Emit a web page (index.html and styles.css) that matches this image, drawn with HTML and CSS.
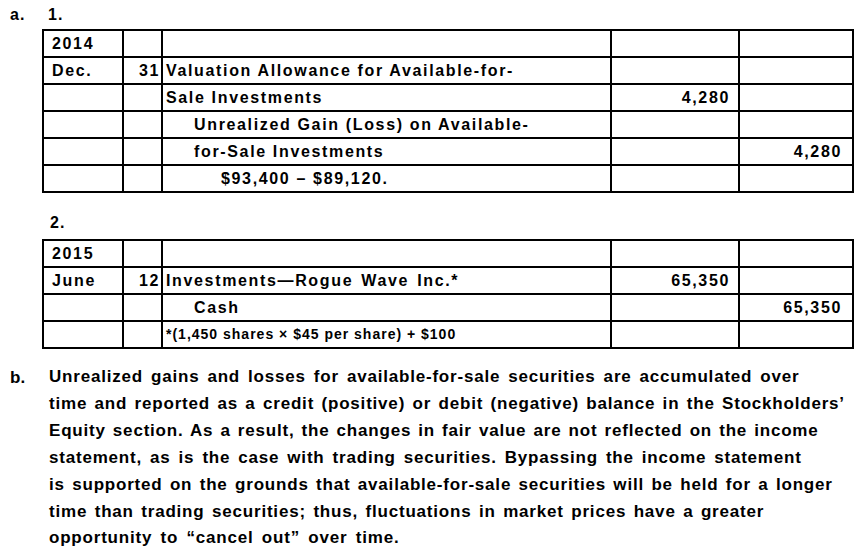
FILE: index.html
```html
<!DOCTYPE html>
<html>
<head>
<meta charset="utf-8">
<link rel="stylesheet" href="styles.css">
</head>
<body>
<div class="page">
  <div class="head"><span class="lbl">a.</span><span class="num">1.</span></div>
  <table class="journal j1">
    <colgroup><col class="c-mo"><col class="c-day"><col class="c-desc"><col class="c-dr"><col class="c-cr"></colgroup>
    <tr><td class="mo">2014</td><td></td><td></td><td></td><td></td></tr>
    <tr><td class="mo">Dec.</td><td class="day">31</td><td class="desc">Valuation Allowance for Available-for-</td><td></td><td></td></tr>
    <tr><td></td><td></td><td class="desc">Sale Investments</td><td class="amt">4,280</td><td></td></tr>
    <tr><td></td><td></td><td class="desc ind1">Unrealized Gain (Loss) on Available-</td><td></td><td></td></tr>
    <tr><td></td><td></td><td class="desc ind1">for-Sale Investments</td><td></td><td class="amt cr">4,280</td></tr>
    <tr><td></td><td></td><td class="desc ind2">$93,400 – $89,120.</td><td></td><td></td></tr>
  </table>
  <div class="head head2"><span class="num">2.</span></div>
  <table class="journal j2">
    <colgroup><col class="c-mo"><col class="c-day"><col class="c-desc"><col class="c-dr"><col class="c-cr"></colgroup>
    <tr><td class="mo">2015</td><td></td><td></td><td></td><td></td></tr>
    <tr><td class="mo">June</td><td class="day">12</td><td class="desc wide">Investments—Rogue Wave Inc.*</td><td class="amt">65,350</td><td></td></tr>
    <tr><td></td><td></td><td class="desc ind1">Cash</td><td></td><td class="amt cr">65,350</td></tr>
    <tr><td></td><td></td><td class="desc note">*(1,450 shares × $45 per share) + $100</td><td></td><td></td></tr>
  </table>
  <div class="partb">
    <span class="lbl">b.</span>
    <p class="text">
      <span class="ln l1">Unrealized gains and losses for available-for-sale securities are accumulated over</span>
      <span class="ln l2">time and reported as a credit (positive) or debit (negative) balance in the Stockholders’</span>
      <span class="ln l3">Equity section. As a result, the changes in fair value are not reflected on the income</span>
      <span class="ln l4">statement, as is the case with trading securities. Bypassing the income statement</span>
      <span class="ln l5">is supported on the grounds that available-for-sale securities will be held for a longer</span>
      <span class="ln l6">time than trading securities; thus, fluctuations in market prices have a greater</span>
      <span class="ln l7">opportunity to “cancel out” over time.</span>
    </p>
  </div>
</div>
</body>
</html>
```

FILE: styles.css
```css
html, body {
  margin: 0;
  padding: 0;
  background: #fff;
}
body {
  font-family: "Liberation Sans", Arial, sans-serif;
  font-weight: bold;
  font-size: 16px;
  color: #000;
}
.page {
  padding: 5px 0 0 10px;
}
.head {
  display: flex;
  height: 20px;
  line-height: 20px;
  letter-spacing: 1.2px;
}
.head .lbl {
  width: 38px;
}
.head2 {
  margin-top: 20px;
  padding-left: 40px;
}
.journal {
  border-collapse: collapse;
  table-layout: fixed;
  width: 810px;
  margin-left: 32px;
  letter-spacing: 1.65px;
}
.j1 {
  margin-top: 4px;
}
.j2 {
  margin-top: 6px;
}
.c-mo { width: 80px; }
.c-day { width: 39px; }
.c-desc { width: 449px; }
.c-dr { width: 128px; }
.c-cr { width: 114px; }
.journal td {
  border: 2px solid #000;
  height: 25px;
  padding: 0 3px;
  line-height: 25px;
  white-space: nowrap;
  overflow: hidden;
}
.journal td.mo {
  padding-left: 8px;
}
.journal td.day {
  text-align: right;
  padding-right: 1px;
}
.journal td.desc {
  padding-left: 3px;
}
.journal td.wide {
  word-spacing: 2px;
}
.journal td.ind1 {
  padding-left: 31px;
}
.journal td.ind2 {
  padding-left: 58px;
}
.journal td.note {
  font-size: 14px;
  letter-spacing: 1px;
  word-spacing: 0;
}
.journal td.amt {
  text-align: right;
  padding-right: 8px;
}
.journal td.amt.cr {
  padding-right: 10px;
}
.partb {
  display: flex;
  margin-top: 15px;
}
.partb .lbl {
  width: 39px;
  line-height: 27px;
  font-size: 17px;
}
.text {
  margin: 0;
  font-size: 17px;
  line-height: 26.9px;
  letter-spacing: 0.8px;
}
.ln {
  display: block;
  white-space: nowrap;
}
.l1 { word-spacing: 2.5px; }
.l2 { word-spacing: 1.9px; }
.l3 { word-spacing: 1.6px; }
.l4 { word-spacing: 2.5px; }
.l5 { word-spacing: 1.9px; }
.l6 { word-spacing: 2px; }
.l7 { word-spacing: 2.8px; }
```
